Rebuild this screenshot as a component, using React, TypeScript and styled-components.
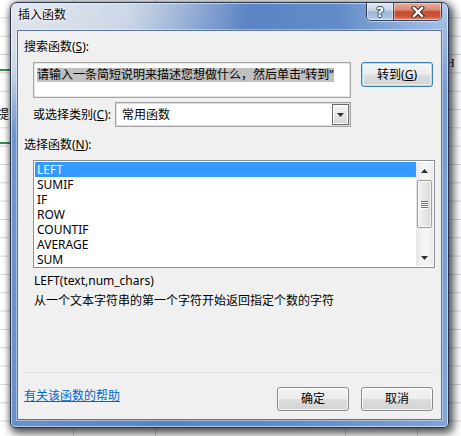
import React from "react";
import styled, { createGlobalStyle } from "styled-components";

const FONT = `"Noto Sans", "Noto Sans CJK SC", sans-serif`;

const GlobalStyle = createGlobalStyle`
  *, *::before, *::after { box-sizing: border-box; }
  html, body { margin: 0; padding: 0; background: #ffffff; }
  body { font-family: ${FONT}; font-size: 12px; color: #000; }
`;

const Sheet = styled.div`
  position: relative;
  width: 461px;
  height: 436px;
  overflow: hidden;
  background-color: #fff;
  background-image:
    linear-gradient(#3b8a52, #3b8a52),
    linear-gradient(#3b8a52, #3b8a52),
    linear-gradient(#d6d6d6, #d6d6d6),
    linear-gradient(#d6d6d6, #d6d6d6),
    linear-gradient(#d6d6d6, #d6d6d6),
    linear-gradient(#d6d6d6, #d6d6d6),
    linear-gradient(to bottom, transparent 17px, #d6d6d6 17px, #d6d6d6 18px, transparent 18px);
  background-size: 12px 2px, 12px 2px, 1px 100%, 1px 100%, 1px 100%, 1px 100%, 100% 18.33px;
  background-position: 0 69px, 0 142px, 73px 0, 155px 0, 345px 0, 417px 0, 0 0;
  background-repeat: no-repeat, no-repeat, no-repeat, no-repeat, no-repeat, no-repeat, repeat-y;
`;

const CellText = styled.span<{ $serif?: boolean }>`
  position: absolute;
  font-size: 12px;
  line-height: 14px;
  font-family: ${(p) => (p.$serif ? `"Liberation Serif", serif` : FONT)};
  color: #000;
`;

const Dialog = styled.div`
  position: absolute;
  left: 10px;
  top: 2px;
  width: 439px;
  height: 426px;
  display: flex;
  flex-direction: column;
  padding: 0 6px 7px;
  border: 1px solid #26354c;
  border-radius: 7px 7px 5px 5px;
  background:
    radial-gradient(ellipse 240px 130px at 0 0, rgba(226, 231, 238, 1) 0%, rgba(210, 219, 231, 0.95) 50%, rgba(200, 212, 228, 0) 100%),
    radial-gradient(ellipse 110px 90px at 100% 0, rgba(186, 208, 238, 0.85), rgba(186, 208, 238, 0)),
    linear-gradient(100deg, #7298cf 0%, #5983c3 45%, #6690cb 75%, #80a5d8 100%);
  box-shadow: inset 0 0 0 1px rgba(255, 255, 255, 0.55), 3px 4px 9px 2px rgba(0, 0, 0, 0.6),
    0 0 6px rgba(0, 0, 0, 0.35);
`;

const TitleBar = styled.div`
  height: 27px;
  flex-shrink: 0;
  display: flex;
  align-items: flex-start;
  justify-content: space-between;
`;

const Title = styled.span`
  margin: 5px 0 0 1px;
  font-size: 12px;
  line-height: 14px;
  text-shadow: 0 0 6px #fff, 0 0 3px #fff, 0 0 1px #fff;
`;

const CaptionGroup = styled.div`
  display: flex;
  height: 18px;
  border: 1px solid rgba(28, 38, 58, 0.8);
  border-top: none;
  border-radius: 0 0 5px 5px;
  overflow: hidden;
  box-shadow: 0 1px 0 rgba(255, 255, 255, 0.5);
`;

const CaptionButton = styled.div<{ $close?: boolean }>`
  width: ${(p) => (p.$close ? 48 : 26)}px;
  height: 100%;
  display: flex;
  align-items: center;
  justify-content: center;
  border-left: ${(p) => (p.$close ? "1px solid rgba(28,38,58,0.7)" : "none")};
  background: ${(p) =>
    p.$close
      ? "linear-gradient(to bottom, #e9ab9c 0%, #dc8a74 40%, #c84a2e 52%, #c9563a 78%, #dd8d74 100%)"
      : "linear-gradient(to bottom, #e2e9f3 0%, #c9d6e8 42%, #9fb6d8 52%, #a9c0e0 80%, #c3d5ec 100%)"};
  box-shadow: inset 0 0 0 1px rgba(255, 255, 255, 0.45);
`;

const HelpGlyph = styled.span`
  font-family: "DejaVu Sans", sans-serif;
  font-weight: bold;
  font-size: 14px;
  line-height: 14px;
  color: #fff;
  text-shadow: 1px 0 0 #3a4556, -1px 0 0 #3a4556, 0 1px 0 #3a4556, 0 -1px 0 #3a4556;
`;

const Client = styled.div`
  flex: 1;
  min-height: 0;
  display: flex;
  flex-direction: column;
  background: #f0f0f0;
  border: 1px solid #5b7496;
  box-shadow: 0 0 0 1px rgba(255, 255, 255, 0.4);
  padding: 9px 8px 8px 6px;
`;

const Label = styled.div<{ $top?: number; $indent?: number }>`
  margin-top: ${(p) => p.$top ?? 0}px;
  margin-left: ${(p) => p.$indent ?? 0}px;
  line-height: 14px;
  font-size: 12px;
  white-space: nowrap;
`;

const SearchRow = styled.div`
  display: flex;
  align-items: flex-start;
  gap: 10px;
  margin: 8px 0 0 9px;
`;

const SearchBox = styled.div`
  width: 318px;
  height: 36px;
  background: #fff;
  border: 1px solid #a4a4a4;
  box-shadow: inset 0 0 0 1px #e6e6e6;
  padding: 3px;
`;

const Selected = styled.span`
  display: inline-block;
  height: 14px;
  line-height: 14px;
  background: #c0c0c0;
  white-space: nowrap;
`;

const Button = styled.button<{ $default?: boolean; $h?: number }>`
  width: 72px;
  height: ${(p) => p.$h ?? 24}px;
  padding: 0;
  border: 1px solid ${(p) => (p.$default ? "#3c7fb1" : "#8a8a8a")};
  border-radius: 3px;
  background: linear-gradient(to bottom, #f4f4f4 0%, #ececec 48%, #dedede 52%, #d2d2d2 100%);
  box-shadow: ${(p) =>
    p.$default
      ? "inset 0 0 0 1px #a9dcf5, inset 0 0 0 2px rgba(255,255,255,0.5)"
      : "inset 0 0 0 1px rgba(255,255,255,0.75)"};
  font-family: ${FONT};
  font-size: 12px;
  line-height: 14px;
  color: #000;
`;

const CategoryRow = styled.div`
  display: flex;
  align-items: center;
  margin: 4px 0 0 9px;
`;

const CategoryLabel = styled.span`
  width: 82px;
  line-height: 14px;
  white-space: nowrap;
`;

const Combo = styled.div`
  width: 236px;
  height: 25px;
  display: flex;
  align-items: center;
  background: #fff;
  border: 1px solid #a2a2a2;
  box-shadow: inset 0 0 0 1px #dedede;
  padding: 1px;
`;

const ComboText = styled.span`
  flex: 1;
  padding-left: 5px;
  line-height: 14px;
`;

const DropButton = styled.div`
  width: 17px;
  height: 21px;
  display: flex;
  align-items: center;
  justify-content: center;
  border: 1px solid #6a6a6a;
  background: linear-gradient(to bottom, #f6f6f6 0%, #e6e6e6 50%, #d4d4d4 100%);
  box-shadow: inset 0 0 0 1px #fff;
`;

const ListBox = styled.div`
  display: flex;
  width: 402px;
  height: 108px;
  margin: 8px 0 0 9px;
  padding: 1px;
  background: #fff;
  border: 1px solid #8e9096;
  overflow: hidden;
`;

const Items = styled.ul`
  flex: 1;
  margin: 0;
  padding: 0;
  list-style: none;
  overflow: hidden;
`;

const Item = styled.li<{ $selected?: boolean }>`
  height: 15px;
  line-height: 15px;
  padding-left: 2px;
  font-size: 12px;
  overflow: hidden;
  background: ${(p) => (p.$selected ? "#3399ff" : "transparent")};
  color: ${(p) => (p.$selected ? "#fff" : "#000")};
`;

const ScrollBar = styled.div`
  width: 17px;
  display: flex;
  flex-direction: column;
  background: linear-gradient(to right, #e6e6e6, #f4f4f4 40%, #f4f4f4 70%, #e9e9e9);
`;

const ArrowBox = styled.div`
  height: 17px;
  flex-shrink: 0;
  display: flex;
  align-items: center;
  justify-content: center;
`;

const Thumb = styled.div`
  height: 48px;
  margin: 1px 1px 0;
  display: flex;
  flex-direction: column;
  align-items: center;
  justify-content: center;
  gap: 1px;
  border: 1px solid #9c9c9c;
  border-radius: 2px;
  background: linear-gradient(to right, #f3f3f3 0%, #e8e8e8 50%, #d6d6d6 100%);
  box-shadow: inset 0 0 0 1px rgba(255, 255, 255, 0.8);
`;

const Grip = styled.span`
  width: 7px;
  height: 1px;
  background: #6e6e6e;
  box-shadow: 0 1px 0 #fff;
`;

const TrackFill = styled.div`
  flex: 1;
`;

const Syntax = styled.div<{ $top: number }>`
  margin: ${(p) => p.$top}px 0 0 10px;
  line-height: 14px;
  white-space: nowrap;
`;

const Spacer = styled.div`
  flex: 1;
`;

const Separator = styled.div`
  height: 1px;
  margin-right: -1px;
  background: #d5dfe5;
  flex-shrink: 0;
`;

const Footer = styled.div`
  display: flex;
  align-items: flex-start;
  margin-top: 14px;
`;

const HelpLink = styled.a`
  margin-top: 2px;
  line-height: 14px;
  color: #0066cc;
  text-decoration: underline;
  cursor: pointer;
`;

const ButtonGroup = styled.div`
  display: flex;
  gap: 12px;
  margin-left: auto;
`;

const Arrow = ({ up }: { up?: boolean }) => (
  <svg width="7" height="4" viewBox="0 0 7 4">
    <path d={up ? "M0 4 L3.5 0 L7 4 Z" : "M0 0 L7 0 L3.5 4 Z"} fill="#303030" />
  </svg>
);

const CloseGlyph = () => (
  <svg width="14" height="12" viewBox="0 0 14 12">
    <path d="M3 2 L11 10 M11 2 L3 10" stroke="#3a2a2a" strokeWidth="4.4" strokeLinecap="square" />
    <path d="M3 2 L11 10 M11 2 L3 10" stroke="#ffffff" strokeWidth="2.4" strokeLinecap="square" />
  </svg>
);

const functions = ["LEFT", "SUMIF", "IF", "ROW", "COUNTIF", "AVERAGE", "SUM"];

export default function App() {
  return (
    <>
      <GlobalStyle />
      <Sheet>
        <CellText style={{ left: -3, top: 108 }}>提</CellText>
        <CellText $serif style={{ left: 446, top: 56 }}>H</CellText>
        <Dialog>
          <TitleBar>
            <Title>插入函数</Title>
            <CaptionGroup>
              <CaptionButton>
                <HelpGlyph>?</HelpGlyph>
              </CaptionButton>
              <CaptionButton $close>
                <CloseGlyph />
              </CaptionButton>
            </CaptionGroup>
          </TitleBar>
          <Client>
            <Label>
              搜索函数(<u>S</u>):
            </Label>
            <SearchRow>
              <SearchBox>
                <Selected>请输入一条简短说明来描述您想做什么，然后单击“转到”</Selected>
              </SearchBox>
              <Button $default $h={25}>
                转到(<u>G</u>)
              </Button>
            </SearchRow>
            <CategoryRow>
              <CategoryLabel>
                或选择类别(<u>C</u>):
              </CategoryLabel>
              <Combo>
                <ComboText>常用函数</ComboText>
                <DropButton>
                  <Arrow />
                </DropButton>
              </Combo>
            </CategoryRow>
            <Label $top={11}>
              选择函数(<u>N</u>):
            </Label>
            <ListBox>
              <Items>
                {functions.map((f, i) => (
                  <Item key={f} $selected={i === 0}>
                    {f}
                  </Item>
                ))}
              </Items>
              <ScrollBar>
                <ArrowBox>
                  <Arrow up />
                </ArrowBox>
                <Thumb>
                  <Grip />
                  <Grip />
                  <Grip />
                  <Grip />
                </Thumb>
                <TrackFill />
                <ArrowBox>
                  <Arrow />
                </ArrowBox>
              </ScrollBar>
            </ListBox>
            <Syntax $top={6}>LEFT(text,num_chars)</Syntax>
            <Syntax $top={6}>从一个文本字符串的第一个字符开始返回指定个数的字符</Syntax>
            <Spacer />
            <Separator />
            <Footer>
              <HelpLink>有关该函数的帮助</HelpLink>
              <ButtonGroup>
                <Button>确定</Button>
                <Button>取消</Button>
              </ButtonGroup>
            </Footer>
          </Client>
        </Dialog>
      </Sheet>
    </>
  );
}
